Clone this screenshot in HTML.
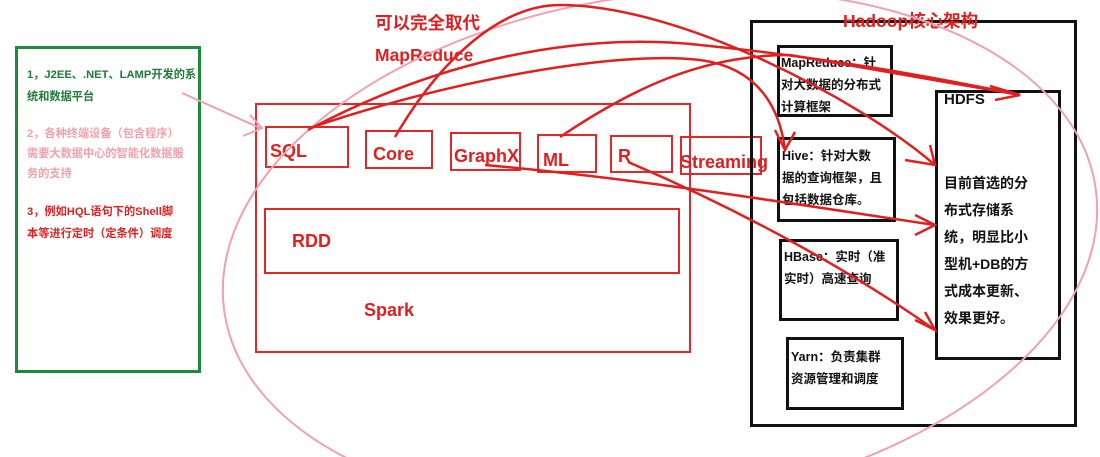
<!DOCTYPE html>
<html><head><meta charset="utf-8"><style>
body{margin:0;width:1100px;height:457px;background:#fff;position:relative;overflow:hidden;font-family:"Liberation Sans","Noto Sans CJK SC",sans-serif;font-weight:bold}
.a{position:absolute;white-space:nowrap}
.b{position:absolute;box-sizing:border-box}
.r{border:2px solid #e02828}
.k{border:3px solid #111}
.t{font-size:12.5px;line-height:22px;color:#111}
</style></head><body>
<div class="b" style="left:15px;top:46px;width:186px;height:327px;border:3px solid #1e8a3c"></div>
<div class="a" style="left:27px;top:64px;font-size:11.2px;line-height:22px;color:#1e7a34">1，J2EE、.NET、LAMP开发的系<br>统和数据平台</div>
<div class="a" style="left:27px;top:124px;font-size:11.2px;line-height:20px;color:#f0a0ac">2，各种终端设备（包含程序）<br>需要大数据中心的智能化数据服<br>务的支持</div>
<div class="a" style="left:27px;top:201px;font-size:11.2px;line-height:22px;color:#e02020">3，例如HQL语句下的Shell脚<br>本等进行定时（定条件）调度</div>

<div class="a" style="left:375px;top:10px;font-size:17.5px;color:#e02020">可以完全取代</div>
<div class="a" style="left:375px;top:45px;font-size:17.5px;color:#e02020">MapReduce</div>

<div class="b r" style="left:255px;top:103px;width:436px;height:250px"></div>
<div class="b r" style="left:265px;top:126px;width:84px;height:42px"></div>
<div class="b r" style="left:365px;top:130px;width:68px;height:39px"></div>
<div class="b r" style="left:450px;top:132px;width:71px;height:39px"></div>
<div class="b r" style="left:537px;top:134px;width:60px;height:39px"></div>
<div class="b r" style="left:610px;top:135px;width:63px;height:38px"></div>
<div class="b r" style="left:680px;top:136px;width:82px;height:39px"></div>
<div class="a" style="left:270px;top:141px;font-size:18px;color:#e02020">SQL</div>
<div class="a" style="left:373px;top:144px;font-size:18px;color:#e02020">Core</div>
<div class="a" style="left:454px;top:146px;font-size:18px;color:#e02020">GraphX</div>
<div class="a" style="left:543px;top:150px;font-size:18px;color:#e02020">ML</div>
<div class="a" style="left:618px;top:146px;font-size:18px;color:#e02020">R</div>
<div class="a" style="left:680px;top:152px;font-size:18px;color:#e02020">Streaming</div>
<div class="b r" style="left:264px;top:208px;width:416px;height:66px"></div>
<div class="a" style="left:292px;top:231px;font-size:18px;color:#e02020">RDD</div>
<div class="a" style="left:364px;top:300px;font-size:18px;color:#e02020">Spark</div>

<div class="b k" style="left:750px;top:20px;width:327px;height:407px"></div>
<div class="a" style="left:843px;top:8px;font-size:17.5px;color:#e02020">Hadoop核心架构</div>
<div class="b k" style="left:777px;top:45px;width:116px;height:72px"></div>
<div class="a t" style="left:781px;top:52px">MapReduce：针<br>对大数据的分布式<br>计算框架</div>
<div class="b k" style="left:777px;top:137px;width:119px;height:85px"></div>
<div class="a t" style="left:782px;top:145px">Hive：针对大数<br>据的查询框架，且<br>包括数据仓库。</div>
<div class="b k" style="left:779px;top:239px;width:120px;height:82px"></div>
<div class="a t" style="left:784px;top:246px">HBase：实时（准<br>实时）高速查询</div>
<div class="b k" style="left:786px;top:337px;width:118px;height:73px"></div>
<div class="a t" style="left:791px;top:346px">Yarn：负责集群<br>资源管理和调度</div>
<div class="b k" style="left:935px;top:90px;width:126px;height:270px"></div>
<div class="a" style="left:944px;top:91px;font-size:15px;color:#111">HDFS</div>
<div class="a" style="left:944px;top:170px;font-size:14px;line-height:27px;color:#111">目前首选的分<br>布式存储系<br>统，明显比小<br>型机+DB的方<br>式成本更新、<br>效果更好。</div>

<svg class="a" style="left:0;top:0" width="1100" height="457" fill="none">
<ellipse cx="660" cy="250" rx="440" ry="255" transform="rotate(-8 660 250)" stroke="#f0a0b0" stroke-width="2"/>
<path d="M182 93 L260 128 M243 136 L262 128 L250 115" stroke="#f0a0b0" stroke-width="2"/>
<g stroke="#e02020" stroke-width="2.5">
<path d="M308 130 C420 70 560 30 700 45 C800 55 900 70 1020 95"/><path d="M995 100 L1020 95 L990 86"/>
<path d="M310 128 C450 80 620 50 700 60 C760 68 780 110 785 150"/><path d="M775 130 L785 150 L795 132"/>
<path d="M395 137 C440 60 500 5 560 5 C680 5 860 100 935 165"/><path d="M905 160 L935 165 L930 145"/>
<path d="M560 137 C630 90 700 55 790 55 L1020 95"/>
<path d="M485 165 C650 180 800 205 935 225"/><path d="M915 215 L935 225 L915 235"/>
<path d="M628 162 C740 210 850 270 935 330"/><path d="M915 320 L935 330 L925 312"/>
</g>
</svg>
</body></html>
